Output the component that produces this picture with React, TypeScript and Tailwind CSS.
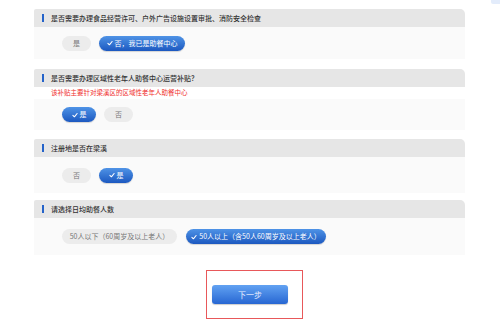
import React from "react";

const font = { fontFamily: '"Noto Sans CJK SC", "Noto Sans", sans-serif' };

const Check = () => (
  <svg width="6" height="6" viewBox="0 0 10 10" className="mr-[2px] shrink-0">
    <polyline points="1.5,5.5 4,8 8.5,2.5" fill="none" stroke="white" strokeWidth="1.8" strokeLinecap="round" strokeLinejoin="round" />
  </svg>
);

const Pill = ({ label, active, w }: { label: string; active?: boolean; w: string }) =>
  active ? (
    <div
      className={`${w} h-[15px] rounded-full flex items-center justify-center text-[7px] text-white bg-gradient-to-b from-[#4f93e6] to-[#1c58c0] shadow-[0_1px_1px_rgba(0,0,0,0.15)]`}
    >
      <Check />
      {label}
    </div>
  ) : (
    <div className={`${w} h-[15px] rounded-full flex items-center justify-center text-[7px] text-[#777] bg-[#ececec]`}>
      {label}
    </div>
  );

const Header = ({ title }: { title: string }) => (
  <div className="h-[18px] bg-[#e6e6e6] rounded-tl-[2px] rounded-tr-[5px] flex items-center pl-[8px]">
    <div className="w-[2px] h-[8px] bg-[#2563c9] mr-[7px]" />
    <span className="text-[7px] text-[#333] font-medium">{title}</span>
  </div>
);

export default function App() {
  return (
    <div className="w-[500px] h-[330px] bg-white relative overflow-hidden" style={font}>
      <div className="absolute right-0 top-0 w-[9px] h-[4px] bg-[#e3ecfb] rounded-bl-[2px]" />
      <div className="ml-[34px] w-[431px] pt-[9px] flex flex-col">
        {/* 1 */}
        <Header title="是否需要办理食品经营许可、户外广告设施设置审批、消防安全检查" />
        <div className="h-[32px] bg-[#fafafa] flex items-center pl-[28px] gap-[8px]">
          <Pill label="是" w="w-[29px]" />
          <Pill label="否，我已是助餐中心" active w="w-[86px]" />
        </div>

        {/* 2 */}
        <div className="mt-[10px]">
          <Header title="是否需要办理区域性老年人助餐中心运营补贴？" />
        </div>
        <div className="h-[12px] flex items-center pl-[17px] text-[6.5px] text-[#f0302e]">
          该补贴主要针对梁溪区的区域性老年人助餐中心
        </div>
        <div className="h-[31px] bg-[#fafafa] flex items-center pl-[28px] gap-[8px]">
          <Pill label="是" active w="w-[34px]" />
          <Pill label="否" w="w-[29px]" />
        </div>

        {/* 3 */}
        <div className="mt-[9px]">
          <Header title="注册地是否在梁溪" />
        </div>
        <div className="h-[36px] bg-[#fafafa] flex items-center pl-[28px] gap-[8px]">
          <Pill label="否" w="w-[29px]" />
          <Pill label="是" active w="w-[34px]" />
        </div>

        {/* 4 */}
        <div className="mt-[7px]">
          <Header title="请选择日均助餐人数" />
        </div>
        <div className="h-[37px] bg-[#fafafa] flex items-center pl-[28px] gap-[9px]">
          <Pill label="50人以下（60周岁及以上老人）" w="w-[115px]" />
          <Pill label="50人以上（含50人60周岁及以上老人）" active w="w-[140px]" />
        </div>
      </div>

      <div className="ml-[206px] mt-[15px] w-[97px] h-[49px] border border-[#e8585a] pt-[14px] pl-[5px]">
        <div className="w-[76px] h-[19px] rounded-[3px] bg-gradient-to-b from-[#62a2f2] to-[#2766d2] flex items-center justify-center text-[8px] text-[#e8efff] shadow-[0_1px_1px_rgba(0,0,0,0.2)]">
          下一步
        </div>
      </div>
    </div>
  );
}
